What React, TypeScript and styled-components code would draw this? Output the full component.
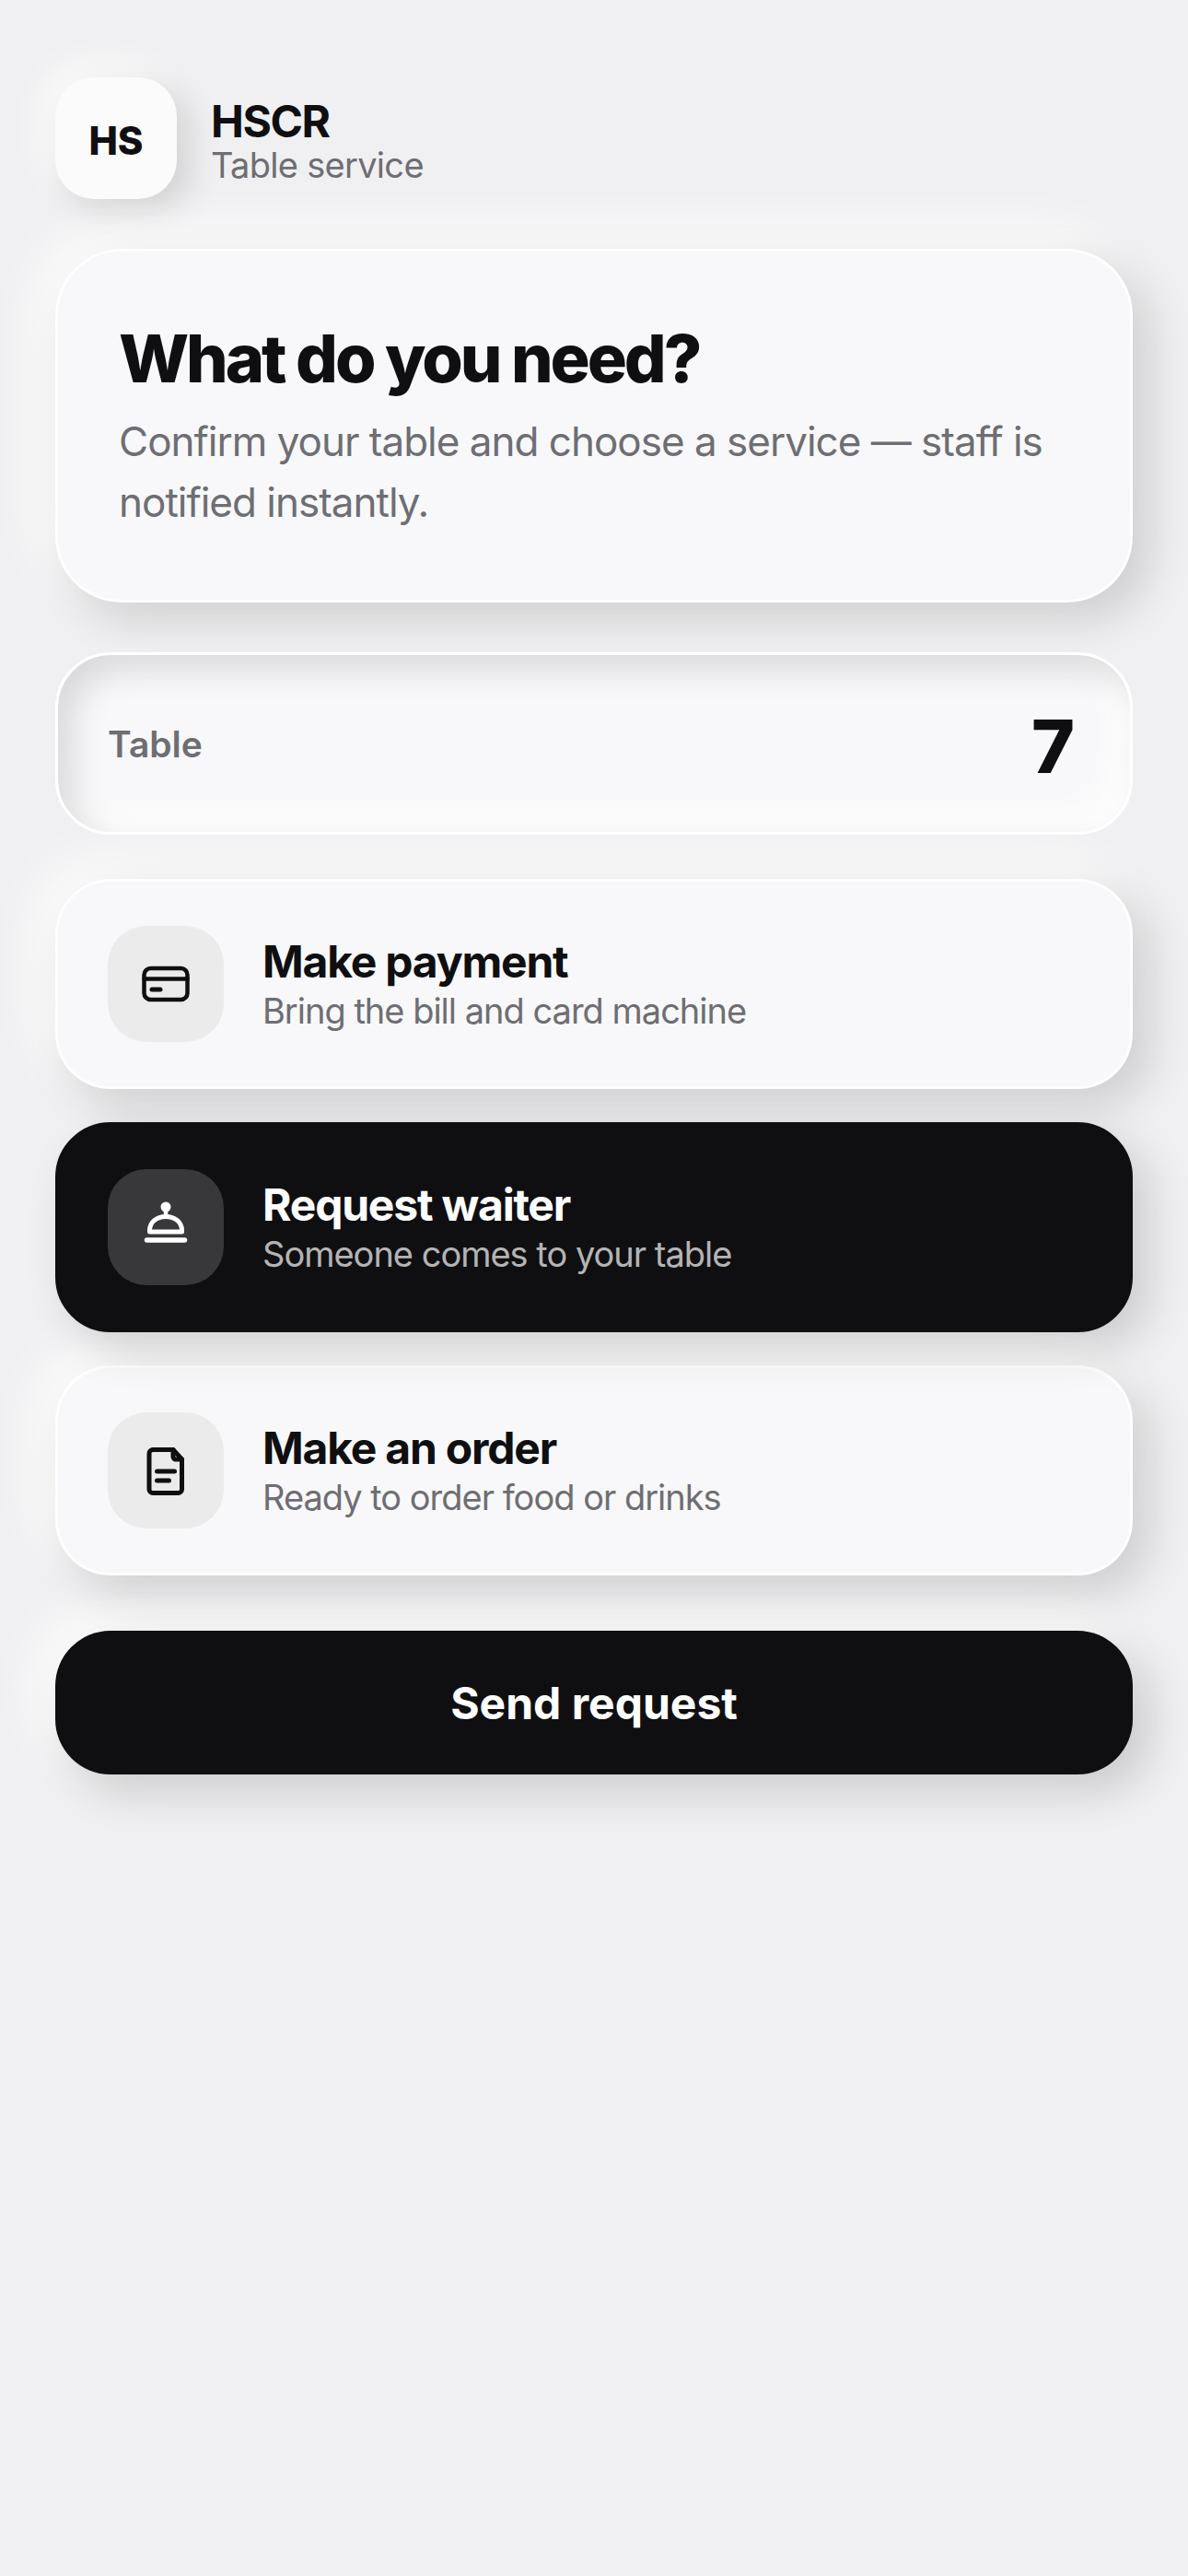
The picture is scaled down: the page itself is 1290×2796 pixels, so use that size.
import React from 'react'
import styled, { createGlobalStyle } from 'styled-components'

const GlobalStyle = createGlobalStyle`
  html, body {
    margin: 0;
    padding: 0;
    background: #f0f0f2;
  }
  body {
    font-family: Inter, "Liberation Sans", sans-serif;
    color: #0f0f11;
  }
`

const raised = '18px 18px 48px rgba(0, 0, 0, 0.15), -18px -18px 54px rgba(255, 255, 255, 0.9)'

const Page = styled.main`
  box-sizing: border-box;
  width: 1290px;
  min-height: 2796px;
  padding: 84px 60px 0;
  display: flex;
  flex-direction: column;
  background: #f0f0f2;
`

const Header = styled.header`
  display: flex;
  align-items: center;
  gap: 37px;
  margin-bottom: 54px;
`

const Logo = styled.div`
  box-sizing: border-box;
  width: 132px;
  height: 132px;
  padding-top: 4px;
  border-radius: 42px;
  background: #fbfbfc;
  box-shadow: 12px 12px 36px rgba(0, 0, 0, 0.14), -12px -12px 36px rgba(255, 255, 255, 0.9);
  display: flex;
  align-items: center;
  justify-content: center;
  font-size: 42px;
  font-weight: 800;
`

const Brand = styled.div`
  display: flex;
  flex-direction: column;
  padding-top: 10px;
`

const BrandName = styled.div`
  font-size: 48px;
  line-height: 48px;
  font-weight: 700;
  letter-spacing: -1.4px;
`

const BrandSub = styled.div`
  font-size: 38px;
  line-height: 46px;
  letter-spacing: -0.7px;
  color: #6e6e73;
`

const Hero = styled.section`
  box-sizing: border-box;
  height: 384px;
  padding: 74px 66px 0;
  border: 3px solid rgba(255, 255, 255, 0.85);
  border-radius: 72px;
  background: #f8f8fa;
  box-shadow: ${raised};
  margin-bottom: 54px;
`

const Title = styled.h1`
  margin: 0 0 15px;
  font-size: 72px;
  line-height: 84px;
  font-weight: 800;
  letter-spacing: -3.1px;
`

const Lead = styled.p`
  margin: 0;
  font-size: 44px;
  line-height: 66px;
  letter-spacing: -1px;
  color: #6e6e73;
`

const TableField = styled.div`
  box-sizing: border-box;
  height: 198px;
  padding: 0 60px 0 54px;
  border: 3px solid #fff;
  border-radius: 60px;
  background: #f8f8fa;
  box-shadow: inset 15px 15px 36px rgba(0, 0, 0, 0.13), inset -15px -15px 36px rgba(255, 255, 255, 0.95);
  display: flex;
  align-items: center;
  justify-content: space-between;
  margin-bottom: 48px;
`

const TableLabel = styled.span`
  font-size: 39px;
  font-weight: 600;
  color: #6e6e73;
`

const TableNumber = styled.span`
  font-size: 80px;
  line-height: 90px;
  padding-top: 6px;
  font-weight: 800;
`

const Services = styled.div`
  display: flex;
  flex-direction: column;
  gap: 36px;
  margin-bottom: 60px;
`

const Service = styled.div<{ $active?: boolean }>`
  box-sizing: border-box;
  position: relative;
  z-index: ${p => (p.$active ? 1 : 'auto')};
  height: 228px;
  padding: 0 54px;
  border: 3px solid ${p => (p.$active ? '#0f0f11' : 'rgba(255, 255, 255, 0.85)')};
  border-radius: 60px;
  background: ${p => (p.$active ? '#0f0f11' : '#f8f8fa')};
  box-shadow: ${p => (p.$active ? '18px 18px 48px rgba(0, 0, 0, 0.15)' : raised)};
  display: flex;
  align-items: center;
  gap: 42px;
`

const IconTile = styled.div<{ $active?: boolean }>`
  width: 126px;
  height: 126px;
  flex: none;
  border-radius: 42px;
  background: ${p => (p.$active ? '#38383a' : '#ebebeb')};
  color: ${p => (p.$active ? '#fff' : '#0f0f11')};
  display: flex;
  align-items: center;
  justify-content: center;
`

const ServiceText = styled.div`
  display: flex;
  flex-direction: column;
`

const ServiceName = styled.div<{ $active?: boolean }>`
  font-size: 48px;
  line-height: 58px;
  font-weight: 700;
  letter-spacing: -1.2px;
  color: ${p => (p.$active ? '#fff' : '#0f0f11')};
`

const ServiceHint = styled.div<{ $active?: boolean }>`
  font-size: 38px;
  line-height: 48px;
  letter-spacing: -1px;
  color: ${p => (p.$active ? 'rgba(255, 255, 255, 0.7)' : '#6e6e73')};
`

const SendButton = styled.button`
  height: 156px;
  border: 0;
  border-radius: 60px;
  background: #0f0f11;
  color: #fff;
  font-family: inherit;
  font-size: 48px;
  font-weight: 700;
  box-shadow: 18px 18px 48px rgba(0, 0, 0, 0.16), -18px -18px 54px rgba(255, 255, 255, 0.9);
`

const CardIcon = () => (
  <svg width="72" height="72" viewBox="0 0 72 72" fill="none" stroke="currentColor" strokeWidth="4.5" strokeLinecap="round">
    <rect x="12.5" y="19" width="47" height="34" rx="7" />
    <path d="M12.5 30.5H59.5" />
    <path d="M21 42H30" strokeWidth="5" />
  </svg>
)

const BellIcon = () => (
  <svg width="72" height="72" viewBox="0 0 72 72" fill="none" stroke="currentColor" strokeWidth="5.5" strokeLinecap="round" strokeLinejoin="round">
    <circle cx="36" cy="14" r="5.5" fill="currentColor" stroke="none" />
    <path d="M36 16V23" strokeWidth="4.5" />
    <path d="M18.5 41V39.5C18.5 30.5 26 24.5 36 24.5C46 24.5 53.5 30.5 53.5 39.5V41H18.5Z" strokeWidth="5" />
    <path d="M15.5 50H56.5" />
  </svg>
)

const DocIcon = () => (
  <svg width="72" height="72" viewBox="0 0 72 72" fill="none" stroke="currentColor" strokeWidth="5" strokeLinecap="round" strokeLinejoin="round">
    <path d="M22 13.5H44L53.5 24V56.5A4 4 0 0 1 49.5 60.5H22A4 4 0 0 1 18 56.5V17.5A4 4 0 0 1 22 13.5Z" />
    <path d="M44 13.5V21A3 3 0 0 0 47 24H53.5" />
    <path d="M26.5 37H45.5" />
    <path d="M26.5 47H39.5" />
  </svg>
)

const services = [
  { name: 'Make payment', hint: 'Bring the bill and card machine', icon: <CardIcon /> },
  { name: 'Request waiter', hint: 'Someone comes to your table', icon: <BellIcon />, active: true },
  { name: 'Make an order', hint: 'Ready to order food or drinks', icon: <DocIcon /> },
]

const App: React.FC = () => {
  return (
    <>
      <GlobalStyle />
      <Page>
        <Header>
          <Logo>HS</Logo>
          <Brand>
            <BrandName>HSCR</BrandName>
            <BrandSub>Table service</BrandSub>
          </Brand>
        </Header>
        <Hero>
          <Title>What do you need?</Title>
          <Lead>Confirm your table and choose a service — staff is notified instantly.</Lead>
        </Hero>
        <TableField>
          <TableLabel>Table</TableLabel>
          <TableNumber>7</TableNumber>
        </TableField>
        <Services>
          {services.map(s => (
            <Service key={s.name} $active={s.active}>
              <IconTile $active={s.active}>{s.icon}</IconTile>
              <ServiceText>
                <ServiceName $active={s.active}>{s.name}</ServiceName>
                <ServiceHint $active={s.active}>{s.hint}</ServiceHint>
              </ServiceText>
            </Service>
          ))}
        </Services>
        <SendButton>Send request</SendButton>
      </Page>
    </>
  )
}

export default App
